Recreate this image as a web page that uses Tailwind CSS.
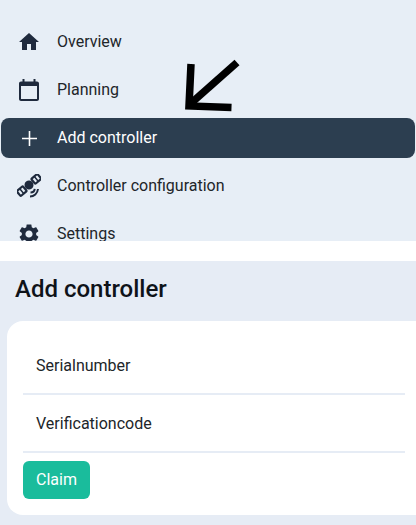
<!DOCTYPE html>
<html lang="en">
  <head>
    <meta charset="UTF-8" />
    <title>Add controller</title>
    <script src="https://cdn.jsdelivr.net/npm/@tailwindcss/browser@4"></script>
  </head>
  <body class="bg-[#e6ecf5] font-['Roboto',sans-serif] h-[525px] w-[416px] overflow-hidden text-[#212529]">
    <!-- Side menu -->
    <nav class="relative h-[241px] overflow-hidden pt-[22px] px-px bg-[#e7eef6] text-base">
      <a class="flex items-center h-10 mb-2 rounded-lg">
        <svg class="w-6 h-6 ml-4 mr-4 text-[#1f2a3d]" viewBox="0 0 24 24" fill="currentColor"><path d="M10 20v-6h4v6h5v-8h3L12 3 2 12h3v8z"/></svg>
        <span>Overview</span>
      </a>
      <a class="flex items-center h-10 mb-2 rounded-lg">
        <svg class="w-6 h-6 ml-4 mr-4 text-[#1f2a3d]" viewBox="0 0 24 24" fill="currentColor"><path d="M20 3.500h-1.500V1h-2v2.500h-9V1h-2v2.500H4c-1.100 0-2 .9-2 2V21c0 1.100.9 2 2 2h16c1.100 0 2-.9 2-2V5.500c0-1.100-.9-2-2-2zM20 21H4V8h16z"/></svg>
        <span>Planning</span>
      </a>
      <a class="flex items-center h-10 mb-2 rounded-lg bg-[#2c3e50] text-white">
        <svg class="w-6 h-6 ml-4 mr-4" viewBox="0 0 24 24" fill="currentColor"><path d="M20 13.300h-6.700V20h-1.600v-6.700H5v-1.600h6.700V5h1.600v6.700H20z"/></svg>
        <span>Add controller</span>
      </a>
      <a class="flex items-center h-10 mb-2 rounded-lg">
        <svg class="w-6 h-6 ml-4 mr-4 text-[#1f2a3d]" viewBox="0 0 24 24" fill="none" stroke="currentColor">
          <g transform="rotate(-40 12 11)">
            <rect x="-1.500" y="7.800" width="8" height="6.400" rx="1" stroke-width="2.200"/>
            <rect x="17.500" y="7.800" width="8" height="6.400" rx="1" stroke-width="2.200"/>
            <circle cx="12" cy="11" r="4.500" fill="currentColor" stroke="none"/>
            <path d="M2.500 8v6M21.500 8v6" stroke-width="1.500"/>
          </g>
          <path d="M13 22.500c4 0 7.500-3 8-7.500M13.500 18.500c2.300 0 4-1.500 4.200-3.700" stroke-width="2"/>
        </svg>
        <span>Controller configuration</span>
      </a>
      <a class="flex items-center h-10 mb-2 rounded-lg">
        <svg class="w-6 h-6 ml-4 mr-4 text-[#1f2a3d]" viewBox="0 0 24 24" fill="currentColor"><path d="M19.140 12.940c.04-.3.06-.61.06-.94 0-.32-.02-.64-.07-.94l2.030-1.580c.18-.14.23-.41.12-.61l-1.920-3.320c-.12-.22-.37-.29-.59-.22l-2.390.96c-.5-.38-1.030-.7-1.620-.94l-.36-2.540c-.04-.24-.24-.41-.48-.41h-3.840c-.24 0-.43.17-.47.41l-.36 2.540c-.59.24-1.130.57-1.620.94l-2.390-.96c-.22-.08-.47 0-.59.22L2.740 8.870c-.12.21-.08.47.12.61l2.030 1.580c-.05.3-.09.63-.09.94s.02.64.07.94l-2.030 1.580c-.18.14-.23.41-.12.61l1.920 3.320c.12.22.37.29.59.22l2.390-.96c.5.38 1.030.7 1.620.94l.36 2.540c.05.24.24.41.48.41h3.840c.24 0 .44-.17.47-.41l.36-2.540c.59-.24 1.130-.56 1.620-.94l2.390.96c.22.08.47 0 .59-.22l1.920-3.320c.12-.22.07-.47-.12-.61l-2.010-1.580zM12 15.600c-1.980 0-3.600-1.620-3.600-3.600s1.620-3.600 3.600-3.600 3.600 1.620 3.600 3.600-1.620 3.600-3.600 3.600z"/></svg>
        <span>Settings</span>
      </a>
      <!-- Arrow drawn over the menu -->
      <svg class="absolute left-[180px] top-[55px] w-[64px] h-[60px]" viewBox="0 0 64 60" fill="none" stroke="#000" stroke-width="7.500">
        <path d="M57 7.500 9 50"/>
        <path d="M11 9 9 51 51.500 52.500"/>
      </svg>
    </nav>
    <div class="h-5 bg-white"></div>

    <!-- Claim form -->
    <main class="pl-[7px]">
      <h1 class="pl-2 pt-3 h-[60px] text-[24px] leading-8 font-medium text-[#0f1319]">Add controller</h1>
      <form class="bg-white rounded-l-2xl h-[194px] pl-4 pr-[11px] pt-[14px]">
        <div class="h-[60px] border-b-2 border-[#e6ecf5] pl-[13px] pt-[19px] leading-6">Serialnumber</div>
        <div class="h-[58px] border-b-2 border-[#e6ecf5] pl-[13px] pt-[17px] leading-6">Verificationcode</div>
        <button type="button" class="mt-2 w-[67px] h-[38px] rounded-md bg-[#1abc9c] text-white text-base">Claim</button>
      </form>
    </main>
  </body>
</html>
